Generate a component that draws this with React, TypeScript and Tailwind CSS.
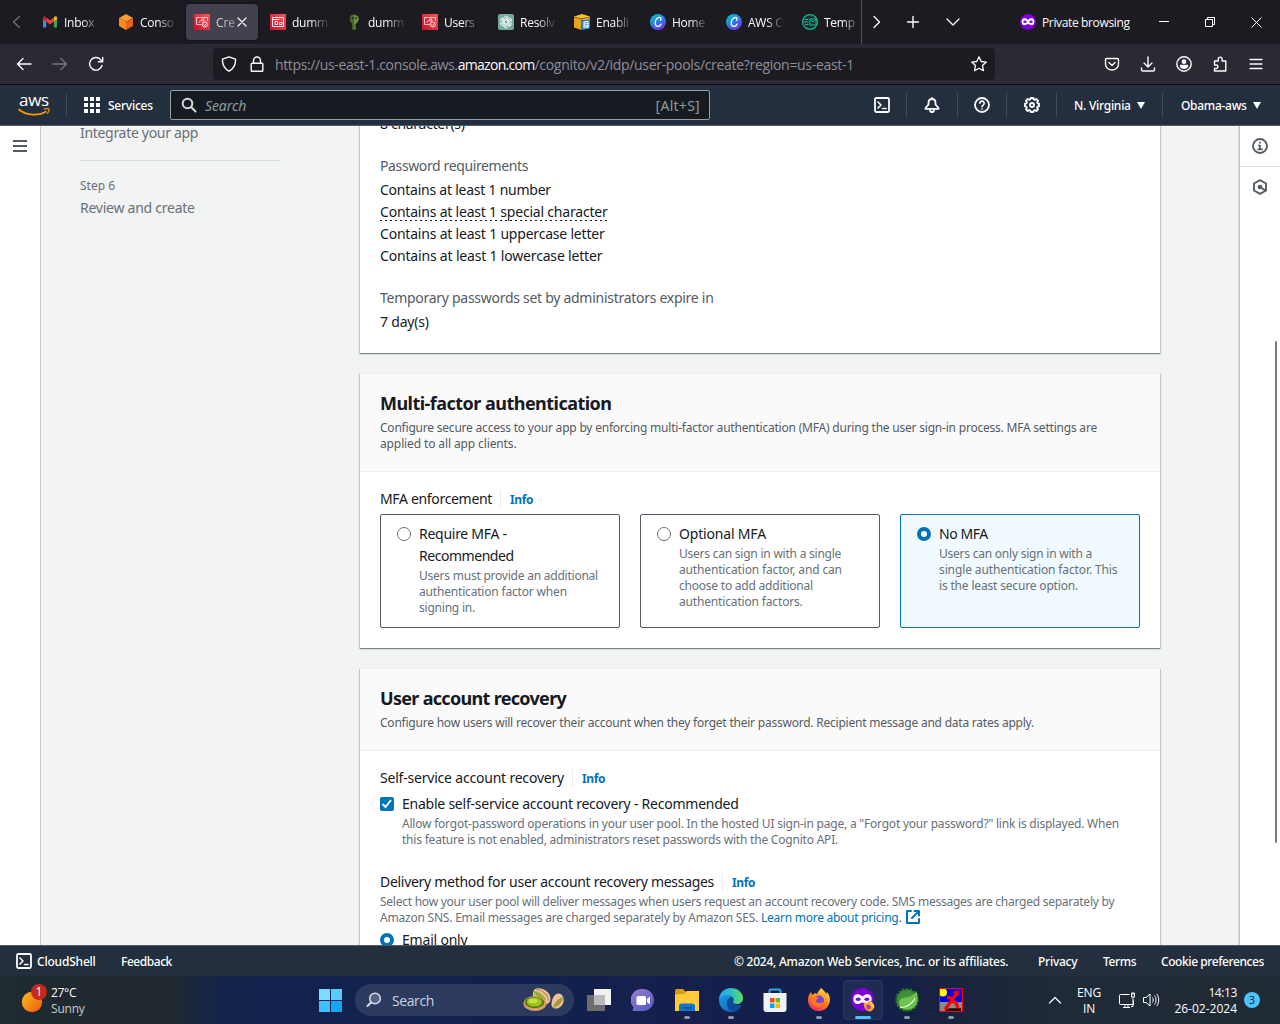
import type { ReactNode } from "react";

/* ---------- Tab icons ---------- */
const GmailIcon = () => (
  <svg width="16" height="16" viewBox="0 0 16 16">
    <path d="M1 13.5V4l3.2 2.4v7.1H2A1 1 0 0 1 1 13.5z" fill="#4285f4" />
    <path d="M11.8 13.5V6.4L15 4v9a.8.8 0 0 1-.9.5z" fill="#34a853" />
    <path d="M11.8 3.4 13 2.6c.9-.6 2 0 2 1.2v1.4l-3.2 2.4z" fill="#fbbc04" />
    <path d="M4.2 7.6V3.4L8 6.3l3.8-2.9v4.2L8 10.5z" fill="#ea4335" />
    <path d="M1 5.200V3.800c0-1.200 1.100-1.800 2-1.200l1.200.8v4.200z" fill="#c5221f" />
  </svg>
);
const CubeIcon = () => (
  <svg width="16" height="16" viewBox="0 0 16 16">
    <path d="M8 0l7 3.900L8 7.800 1 3.900z" fill="#fb9a2c" />
    <path d="M1 3.900l7 3.900V16l-7-3.900z" fill="#f68a1f" />
    <path d="M15 3.900L8 7.800V16l7-3.900z" fill="#e8601b" />
  </svg>
);
const CognitoIcon = () => (
  <svg width="16" height="16" viewBox="0 0 16 16" fill="none" stroke="#fff">
    <defs>
      <linearGradient id="cog" x1="0" y1="1" x2="1" y2="0">
        <stop stopColor="#c8102e" />
        <stop offset="1" stopColor="#ff5252" />
      </linearGradient>
    </defs>
    <path d="M0 0h16v16H0z" fill="url(#cog)" stroke="none" />
    <path d="M7.500 10.500h-5v-7h11V7M4.500 8.500l3-2.300" strokeWidth=".8" strokeOpacity=".9" />
    <circle cx="8.800" cy="6" r="1.200" strokeWidth=".8" />
    <circle cx="10.800" cy="10.500" r="2.500" strokeWidth=".9" />
    <path d="M9.600 10.500l1 1 1.500-1.700" strokeWidth=".8" />
  </svg>
);
const CardIcon = () => (
  <svg width="16" height="16" viewBox="0 0 16 16" fill="none" stroke="#fff" strokeWidth=".9">
    <path d="M0 0h16v16H0z" fill="url(#cog)" stroke="none" />
    <path d="M2.500 3.500h11v9h-11zM2.500 5.500h7M5 7.500h2.500v3H5zM9.500 8.500h2.500v2H9.500zM11 5h1" />
  </svg>
);
const KeyIcon = () => (
  <svg width="16" height="16" viewBox="0 0 16 16">
    <path d="M5 1.500L8 .5l4 1.500 1 3-1.500 3.500-1.500 1v5L8 16l-1.500-1V9.500L4 7V4z" fill="#6b8e3a" />
    <path d="M8 .5L5 1.500 4 4v3l2.500 2.500V15L8 16z" fill="#4b612c" />
    <path d="M6.200 3.200h1.700v1.600H6.200zM9.200 3.200h1.600v1.600H9.200zM8.700 10.500h2v1h-2zM8.700 12.500h1.500v.8H8.700z" fill="#1c1b22" />
  </svg>
);
const GptIcon = () => (
  <svg width="16" height="16" viewBox="0 0 16 16" fill="none" stroke="#fff" strokeWidth=".85">
    <rect width="16" height="16" rx="2" fill="#74aa9c" stroke="none" />
    {[0, 60, 120, 180, 240, 300].map((a) => (
      <path key={a} transform={`rotate(${a} 8 8)`} d="M8 5.800L5.800 7.100V4.400a2.300 2.300 0 0 1 4-1.500L7.200 4.500v2" />
    ))}
  </svg>
);
const EnableIcon = () => (
  <svg width="16" height="16" viewBox="0 0 16 16">
    <path d="M0 2.500L8 0l8 2.500v3L8 4.500 0 5z" fill="#fbc02d" />
    <path d="M0 3l7.500 1.500V16L0 13.500z" fill="#e8a320" />
    <path d="M7.500 4.500L16 3v3H7.500z" fill="#f0ac26" />
    <path d="M0 3.200l7.500 1.500L16 3.200" fill="none" stroke="#5a3c0b" strokeWidth=".7" />
    <path d="M8 6.500l8-1.500v9.500L8 16z" fill="#2d86c4" />
    <path d="M9.500 7.500l5-.8v6.800l-5 .8z" fill="#fff" />
    <path d="M10.500 9l3-.5M10.500 11l3-.5M10.500 13l2-.4" stroke="#2d86c4" />
  </svg>
);
const CanvaIcon = () => (
  <svg width="16" height="16" viewBox="0 0 16 16">
    <defs>
      <linearGradient id="canva" x1=".15" y1="0" x2=".75" y2="1">
        <stop stopColor="#00c4cc" />
        <stop offset=".5" stopColor="#2b7de9" />
        <stop offset="1" stopColor="#7d2ae8" />
      </linearGradient>
    </defs>
    <circle cx="8" cy="8" r="8" fill="url(#canva)" />
    <path d="M10.600 6.400c.9-1.500.4-3-1-3C7.200 3.400 5.200 6.300 5.200 8.900c0 2.100 1.100 3.400 2.700 3.400 1.500 0 2.600-1 3.200-2.200" fill="none" stroke="#fff" strokeWidth="1.300" strokeLinecap="round" />
  </svg>
);
const TempIcon = () => (
  <svg width="16" height="16" viewBox="0 0 16 16" fill="none" stroke="#14b88a">
    <circle cx="8" cy="8" r="7.400" fill="#20303a" strokeWidth="1.200" />
    <path d="M8 5h6v6H8zM8 5l3 3 3-3M3 5.500h3.500M2 8h4.500M3 10.500h3.500" />
  </svg>
);
const tabs: { t: string; icon: ReactNode; active?: boolean }[] = [
  { t: "Inbox", icon: <GmailIcon /> },
  { t: "Conso", icon: <CubeIcon /> },
  { t: "Cre", icon: <CognitoIcon />, active: true },
  { t: "dumm", icon: <CardIcon /> },
  { t: "dumm", icon: <KeyIcon /> },
  { t: "Users", icon: <CognitoIcon /> },
  { t: "Resolv", icon: <GptIcon /> },
  { t: "Enabli", icon: <EnableIcon /> },
  { t: "Home", icon: <CanvaIcon /> },
  { t: "AWS C", icon: <CanvaIcon /> },
  { t: "Temp", icon: <TempIcon /> },
];

const MaskIcon = ({ size }: { size: number }) => (
  <svg width={size} height={size} viewBox="0 0 16 16">
    <circle cx="8" cy="8" r="8" fill="#7f00d6" />
    <path d="M8 5.900C6.800 4.600 5.600 4.300 4.600 4.300 2.700 4.300 1.600 5.700 1.600 7.700c0 2 1.200 3.500 3 3.500 1.500 0 2.200-1.200 3.400-1.200s1.900 1.200 3.400 1.200c1.800 0 3-1.500 3-3.500s-1.100-3.400-3-3.400c-1 0-2.200.3-3.400 1.600z" fill="#fff" />
    <ellipse cx="5" cy="7.800" rx="1.700" ry="1.200" fill="#7f00d6" />
    <ellipse cx="11" cy="7.800" rx="1.700" ry="1.200" fill="#7f00d6" />
  </svg>
);

const Stroke = ({ d, w = 16, sw = 1.4, c = "#fbfbfe", children, cls = "" }: { d?: string; w?: number; sw?: number; c?: string; children?: ReactNode; cls?: string }) => (
  <svg width={w} height={w} viewBox="0 0 16 16" fill="none" stroke={c} strokeWidth={sw} strokeLinecap="round" strokeLinejoin="round" className={"shrink-0 " + cls}>
    {d && <path d={d} />}
    {children}
  </svg>
);

function TabStrip() {
  return (
    <div className="flex h-11 bg-[#1c1b22] font-['Open_Sans',sans-serif] text-[12px] text-[#fbfbfe]">
      <div className="flex w-[34px] shrink-0 items-center pl-[9px]">
        <Stroke d="M10.500 2.500L4.500 8l6 5.500" c="#77767c" sw={1.2} />
      </div>
      <div className="flex w-[828px] shrink-0 overflow-hidden border-r border-[#52525e] py-1">
        {tabs.map((tab, i) => (
          <div key={i} className="w-[76px] shrink-0">
            <div className={"flex h-9 w-[72px] items-center rounded pl-2 " + (tab.active ? "bg-[#42414d] shadow-[0_0_3px_rgba(0,0,0,0.6)]" : "")}>
              <span className="w-4 shrink-0">{tab.icon}</span>
              <span className={"ml-1.5 shrink-0 whitespace-nowrap pt-px " + (tab.active ? "w-[19px] tracking-[-0.1px] [mask-image:linear-gradient(to_right,#000c_10%,#0006)]" : "w-[36px] tracking-[-0.25px] [mask-image:linear-gradient(to_right,black_50%,#0003_90%)]")}>
                {tab.t}
              </span>
              {tab.active && <Stroke d="M4 4l8 8M12 4l-8 8" sw={1.2} cls="ml-[-1px]" />}
            </div>
          </div>
        ))}
      </div>
      <div className="flex flex-1 items-center">
        <Stroke d="M6 2.500l5.500 5.500L6 13.500" sw={1.3} cls="ml-[6px]" />
        <Stroke d="M8 2.500v11M2.500 8h11" sw={1.4} cls="ml-[21px]" />
        <Stroke d="M2 5l6 6 6-6" sw={1.3} cls="ml-[24px]" />
        <span className="ml-[59px]"><MaskIcon size={16} /></span>
        <span className="ml-1.5 w-[91px] whitespace-nowrap pt-px tracking-[-0.36px]">Private browsing</span>
        <svg width="10" height="10" className="ml-[26px]" stroke="#fff" fill="none"><path d="M0 4.500h10" /></svg>
        <svg width="10" height="10" className="ml-[36px]" stroke="#fff" fill="none"><path d="M.5 2.500h7v7h-7zM2.500 2.500v-2h7v7h-2" /></svg>
        <svg width="11" height="11" className="ml-[36px]" stroke="#fff" fill="none"><path d="M.5.5l10 10M10.500.5l-10 10" /></svg>
      </div>
    </div>
  );
}

function Toolbar() {
  return (
    <div className="flex h-[41px] items-center border-b border-[#0c0c0d] bg-[#2b2a33]">
      <Stroke d="M15 8H1.500M7 2.500L1.500 8 7 13.500" cls="ml-4" />
      <Stroke d="M1 8h13.500M9 2.500l5.500 5.500L9 13.500" c="#77767c" cls="ml-5" />
      <Stroke cls="ml-5" d="M14 9.500A6.300 6.300 0 1 1 12.500 3.500L14.500 5.500M14.700 1.500v4.200h-4.200" />
      <div className="ml-[109px] flex h-8 w-[782px] items-center rounded bg-[#1c1b22]">
        <Stroke cls="ml-2" d="M8 .8l6.500 2.400c.3 5-2 9.500-6.500 12-4.500-2.500-6.800-7-6.500-12z" />
        <Stroke cls="ml-3" d="M3 7.200h10a.8.8 0 0 1 .8.8v6.400a.8.8 0 0 1-.8.8H3a.8.8 0 0 1-.8-.8V8a.8.8 0 0 1 .8-.8zM4.500 7V4.500a3.500 3.500 0 0 1 7 0V7" />
        <div className="ml-[10px] whitespace-nowrap pt-px font-['Open_Sans',sans-serif] text-[14px] tracking-[-0.373px] text-[#8f8f98]">
          https://us-east-1.console.aws.<span className="tracking-[-0.7px] text-[#fbfbfe]">amazon.com</span><span className="tracking-[-0.31px]">/cognito/v2/idp/user-pools/create?region=us-east-1</span>
        </div>
        <Stroke cls="ml-auto mr-2" sw={1.3} d="M8 .8l2.200 4.700 5.100.6-3.800 3.500 1 5.100L8 12.200l-4.500 2.500 1-5.100L.7 6.100l5.100-.6z" />
      </div>
      <div className="ml-auto flex items-center gap-5 pr-4">
        <Stroke d="M2.500 2.500h11a1 1 0 0 1 1 1V8a6.500 6 0 0 1-13 0V3.500a1 1 0 0 1 1-1zM5 6.500l3 3 3-3" />
        <Stroke d="M8 1v10M4 7l4 4 4-4M1.500 12v1.500a1.500 1.500 0 0 0 1.500 1.500h10a1.500 1.500 0 0 0 1.500-1.500V12" />
        <Stroke>
          <circle cx="8" cy="8" r="7.200" />
          <circle cx="8" cy="5.700" r="1.700" fill="#fbfbfe" />
          <path d="M4.500 9.500h7c0 1.800-1.600 2.700-3.500 2.700s-3.500-.9-3.500-2.700z" fill="#fbfbfe" />
        </Stroke>
        <Stroke d="M2.500 5h3.800V3a1.900 1.900 0 0 1 3.800 0v2h3.700v10H2.500v-2.500h1.700a1.700 1.700 0 0 0 0-3.500H2.500z" />
        <Stroke d="M2 3.500h12M2 8h12M2 12.500h12" sw={1.3} />
      </div>
    </div>
  );
}

const ShellIcon = ({ cls = "" }: { cls?: string }) => (
  <Stroke sw={1.8} cls={cls}>
    <rect x="1" y="1" width="14" height="14" rx="1.200" />
    <path d="M4 5l3 3-3 3M8.500 11.500H12" strokeWidth="1.600" />
  </Stroke>
);
const Bar = ({ cls = "" }: { cls?: string }) => <span className={"h-6 w-px shrink-0 bg-[#414d5c] " + cls} />;
const Caret = ({ cls = "" }: { cls?: string }) => (
  <svg width="8" height="7" viewBox="0 0 8 7" className={cls}><path d="M0 0h8L4 7z" fill="#fff" /></svg>
);

function AwsHeader() {
  return (
    <div className="flex h-[41px] items-center border-b border-[#545b64] bg-[#232f3e] font-['Noto_Sans',sans-serif] text-[12px] font-medium text-white">
      <div className="ml-[18px] flex w-8 shrink-0 flex-col items-center">
        <span className="h-3 font-['Open_Sans',sans-serif] text-[17px] font-medium leading-[10px] tracking-[-0.3px]">aws</span>
        <svg width="32" height="8" viewBox="0 0 32 8" fill="none" stroke="#f90" className="mt-px">
          <path d="M.5 1.200C8.500 7.800 21 8.200 28.500 3.200" strokeWidth="1.700" />
          <path d="M26 1.300c2-.8 4-.9 4.800-.4.5.800-.2 3-1.600 4.800" strokeWidth="1.200" />
        </svg>
      </div>
      <Bar cls="ml-4 h-[22px]" />
      <div className="ml-[17px] grid shrink-0 grid-cols-3 gap-[2px]">
        {Array.from({ length: 9 }, (_, i) => <i key={i} className="size-[4px] bg-white" />)}
      </div>
      <span className="ml-2 w-[46px] pt-px tracking-[-0.25px]">Services</span>
      <div className="ml-4 flex h-[30px] w-[540px] shrink-0 items-center rounded-[2px] border border-[#95a0a0] bg-[#161b22] text-[14px] font-normal text-[#8d9b9b]">
        <Stroke cls="ml-2.5" sw={2} c="#d5dbdb"><circle cx="6.500" cy="6.500" r="4.800" /><path d="M10.300 10.300l4.200 4.200" /></Stroke>
        <span className="ml-2 italic tracking-[-0.1px]">Search</span>
        <span className="ml-auto mr-[9px] tracking-[0.28px]">[Alt+S]</span>
      </div>
      <ShellIcon cls="ml-[164px]" />
      <Bar cls="ml-4" />
      <Stroke sw={1.800} cls="ml-[17px]" d="M8 1v1M8 2c-2.500 0-3.500 1.800-3.500 4v1.500L1.500 11v.8h13V11l-3-3.500V6c0-2.200-1-4-3.500-4zM6 12.500C6 16 10 16 10 12.500" />
      <Bar cls="ml-[17px]" />
      <Stroke sw={1.800} cls="ml-4"><circle cx="8" cy="8" r="7" /><path d="M5.800 6.300a2.200 2.200 0 1 1 3.300 1.900C8.300 8.600 8 9 8 9.800M8 11.800v.2" strokeWidth="1.600" /></Stroke>
      <Bar cls="ml-4" />
      <Stroke sw={1.900} cls="ml-[17px]">
        <path d="M6.700 1h2.600l.4 1.400 1.200.5L12.300 2l1.700 1.700-.8 1.400.5 1.200 1.300.4v2.600l-1.400.4-.5 1.200.9 1.400-1.700 1.700-1.400-.8-1.200.5-.4 1.300H6.700l-.4-1.400-1.200-.5-1.400.9L2 12.300l.8-1.400-.5-1.200L1 9.300V6.700l1.400-.4.5-1.200L2 3.700 3.700 2l1.400.8 1.200-.5z" />
        <circle cx="8" cy="8" r="2" />
      </Stroke>
      <Bar cls="ml-4" />
      <span className="ml-[17px] w-[59px] whitespace-nowrap pt-px tracking-[-0.26px]">N. Virginia</span>
      <Caret cls="ml-1" />
      <Bar cls="ml-[17px]" />
      <span className="ml-[18px] w-[68px] whitespace-nowrap pt-px tracking-[-0.29px]">Obama-aws</span>
      <Caret cls="ml-1" />
    </div>
  );
}

/* ---------- Console content ---------- */
const shadow = "shadow-[0_1px_1px_0_rgba(0,28,36,0.3),1px_1px_1px_0_rgba(0,28,36,0.15),-1px_1px_1px_0_rgba(0,28,36,0.15)]";
const Line = ({ children, cls = "" }: { children: ReactNode; cls?: string }) => (
  <div className={"whitespace-nowrap text-[14px] leading-[22px] " + cls}>{children}</div>
);
const Small = ({ children, cls = "" }: { children: ReactNode; cls?: string }) => (
  <div className={"whitespace-nowrap text-[12px] leading-4 " + cls}>{children}</div>
);
const Info = () => (
  <span className="ml-2 flex h-[18px] items-center border-l border-[#eaeded] pl-[9px] pt-[2px] text-[12px] font-bold tracking-[-0.4px] text-[#0073bb]">Info</span>
);
const Radio = ({ on = false, cls = "" }: { on?: boolean; cls?: string }) => (
  <span className={"size-[14px] shrink-0 rounded-full bg-white " + (on ? "border-[4px] border-[#0073bb] " : "border border-[#687078] ") + cls} />
);

function Tile({ title, desc, on }: { title: [string, string][]; desc: [string, string][]; on?: boolean }) {
  return (
    <div className={"flex h-[114px] w-60 rounded-[2px] border pl-4 pt-2 " + (on ? "border-[#0073bb] bg-[#f1faff]" : "border-[#545b64] bg-white")}>
      <Radio on={on} cls="mt-1" />
      <div className="ml-2">
        {title.map(([t, k]) => <Line key={t} cls={k}>{t}</Line>)}
        <div className="mt-px text-[#687078]">
          {desc.map(([t, k]) => <Small key={t} cls={k}>{t}</Small>)}
        </div>
      </div>
    </div>
  );
}

function Content() {
  return (
    <div className="relative flex h-[819px] overflow-hidden bg-[#f2f3f3] font-['Noto_Sans',sans-serif] text-[#16191f]">
      <div className="w-[41px] shrink-0 border-r border-[#c5cccc] bg-white pl-[13px] pt-[14px]">
        <svg width="14" height="12" fill="#545b64"><path d="M0 0h14v2H0zM0 5h14v2H0zM0 10h14v2H0z" /></svg>
      </div>
      <div className="ml-[39px] w-[200px] shrink-0 text-[#687078]">
        <Line cls="mt-[-4px] tracking-[-0.31px]">Integrate your app</Line>
        <div className="mt-4 border-t border-[#d5dbdb]" />
        <Small cls="mt-[17px]">Step 6</Small>
        <Line cls="mt-[3px] tracking-[-0.25px]">Review and create</Line>
      </div>
      <div className="ml-20 mt-[-14px] w-[800px] shrink-0">
        <section className={"h-[241px] bg-white pl-5 pt-px " + shadow}>
          <Line cls="tracking-[-0.3px]">8 character(s)</Line>
          <Line cls="mt-5 tracking-[-0.38px] text-[#545b64]">Password requirements</Line>
          <Line cls="mt-0.5 tracking-[-0.24px]">Contains at least 1 number</Line>
          <div className="flex h-[22px]">
            <Line cls="h-[20px] tracking-[-0.206px] [background:repeating-linear-gradient(to_right,#16191f_0_2px,transparent_2px_5px)_0_100%/100%_1px_no-repeat]">Contains at least 1 special character</Line>
          </div>
          <Line cls="tracking-[-0.203px]">Contains at least 1 uppercase letter</Line>
          <Line cls="tracking-[-0.18px]">Contains at least 1 lowercase letter</Line>
          <Line cls="mt-5 tracking-[-0.279px] text-[#545b64]">Temporary passwords set by administrators expire in</Line>
          <Line cls="mt-0.5 tracking-[-0.2px]">7 day(s)</Line>
        </section>

        <section className={"mt-5 h-[275px] border-t border-[#eaeded] bg-white " + shadow}>
          <header className="h-[98px] border-b border-[#eaeded] bg-[#fafafa] pl-5 pt-[18px]">
            <h2 className="text-[18px] font-bold leading-[22px] tracking-[-0.525px]">Multi-factor authentication</h2>
            <div className="mt-[6px] text-[#545b64]">
              <Small cls="tracking-[-0.212px]">Configure secure access to your app by enforcing multi-factor authentication (MFA) during the user sign-in process. MFA settings are</Small>
              <Small cls="tracking-[-0.12px]">applied to all app clients.</Small>
            </div>
          </header>
          <div className="px-5 pt-4">
            <div className="flex items-center"><Line cls="tracking-[-0.328px]">MFA enforcement</Line><Info /></div>
            <div className="mt-1 flex gap-5">
              <Tile title={[["Require MFA -", "tracking-[-0.27px]"], ["Recommended", "tracking-[-0.46px]"]]} desc={[["Users must provide an additional", "tracking-[-0.229px]"], ["authentication factor when", "tracking-[-0.18px]"], ["signing in.", "tracking-[-0.22px]"]]} />
              <Tile title={[["Optional MFA", "tracking-[-0.18px]"]]} desc={[["Users can sign in with a single", "tracking-[-0.23px]"], ["authentication factor, and can", "tracking-[-0.15px]"], ["choose to add additional", "tracking-[-0.22px]"], ["authentication factors.", "tracking-[-0.16px]"]]} />
              <Tile on title={[["No MFA", "tracking-[-0.42px]"]]} desc={[["Users can only sign in with a", "tracking-[-0.23px]"], ["single authentication factor. This", "tracking-[-0.114px]"], ["is the least secure option.", "tracking-[-0.17px]"]]} />
            </div>
          </div>
        </section>

        <section className={"mt-5 h-[400px] border-t border-[#eaeded] bg-white " + shadow}>
          <header className="h-[82px] border-b border-[#eaeded] bg-[#fafafa] pl-5 pt-[18px]">
            <h2 className="text-[18px] font-bold leading-[22px] tracking-[-0.69px]">User account recovery</h2>
            <Small cls="mt-[6px] tracking-[-0.223px] text-[#545b64]">Configure how users will recover their account when they forget their password. Recipient message and data rates apply.</Small>
          </header>
          <div className="px-5 pt-4">
            <div className="flex items-center"><Line cls="tracking-[-0.203px]">Self-service account recovery</Line><Info /></div>
            <div className="mt-1 flex">
              <span className="mt-1 flex size-[14px] items-center justify-center rounded-[2px] bg-[#0073bb]">
                <svg width="14" height="14" fill="none" stroke="#fff" strokeWidth="2"><path d="M2.500 7l3 3 5.500-7" /></svg>
              </span>
              <div className="ml-2">
                <Line cls="tracking-[-0.235px]">Enable self-service account recovery - Recommended</Line>
                <div className="mt-px text-[#687078]">
                  <Small cls="tracking-[-0.214px]">Allow forgot-password operations in your user pool. In the hosted UI sign-in page, a "Forgot your password?" link is displayed. When</Small>
                  <Small cls="tracking-[-0.209px]">this feature is not enabled, administrators reset passwords with the Cognito API.</Small>
                </div>
              </div>
            </div>
            <div className="mt-[23px] flex items-center"><Line cls="tracking-[-0.296px]">Delivery method for user account recovery messages</Line><Info /></div>
            <div className="mt-px text-[#687078]">
              <Small cls="tracking-[-0.248px]">Select how your user pool will deliver messages when users request an account recovery code. SMS messages are charged separately by</Small>
              <div className="flex h-4">
                <Small cls="w-[381px] tracking-[-0.212px]">Amazon SNS. Email messages are charged separately by Amazon SES.</Small>
                <Small cls="w-[144px] tracking-[-0.26px] text-[#0073bb]">Learn more about pricing.</Small>
                <Stroke c="#0073bb" sw={2} cls="mt-[-1px]" d="M6 2H2v12h12v-4M9.500 2H14v4.500M14 2L7 9" />
              </div>
            </div>
            <div className="mt-[3px] flex"><Radio on cls="mt-1" /><Line cls="ml-2 tracking-[-0.2px]">Email only</Line></div>
          </div>
        </section>
      </div>
      <div className="ml-[79px] flex-1 border-l border-[#b9c0c0] bg-white shadow-[-1px_0_0_#dfe3e3]">
        <div className="flex h-[41px] items-center justify-center border-b border-[#d5dbdb]">
          <Stroke c="#545b64" sw={1.900}><circle cx="8" cy="8" r="7" /><path d="M6.800 7.500H8V11M6.300 11.300h3.600M8 4.500v.2" strokeLinecap="square" strokeWidth="1.700" /></Stroke>
        </div>
        <div className="mt-3 flex justify-center">
          <Stroke c="#545b64" sw={1.900}><path d="M8 1.200l6 3.300v7L8 14.800l-6-3.300v-7zM8 8l5.500 3.500" /><circle cx="8" cy="8" r="1.400" fill="#545b64" /></Stroke>
        </div>
      </div>
      <div className="absolute right-[3px] top-[215px] h-[502px] w-0.5 rounded bg-[#7c7c7f]" />
    </div>
  );
}

function Footer() {
  return (
    <div className="flex h-[31px] items-center whitespace-nowrap border-t border-[#545b64] bg-[#232f3e] font-['Noto_Sans',sans-serif] text-[12px] font-medium text-white">
      <ShellIcon cls="ml-4" />
      <span className="ml-[5px] w-[60px] pt-px tracking-[-0.2px]">CloudShell</span>
      <span className="ml-6 pt-px tracking-[-0.45px]">Feedback</span>
      <span className="ml-auto w-[275px] pt-px tracking-[-0.25px]">© 2024, Amazon Web Services, Inc. or its affiliates.</span>
      <span className="ml-[29px] w-10 pt-px tracking-[-0.25px]">Privacy</span>
      <span className="ml-[25px] w-[33px] pt-px tracking-[-0.4px]">Terms</span>
      <span className="ml-[25px] mr-[15px] w-[104px] pt-px tracking-[-0.42px]">Cookie preferences</span>
    </div>
  );
}

/* ---------- Taskbar ---------- */
const App24 = ({ children, run, on }: { children: ReactNode; run?: boolean; on?: boolean }) => (
  <div className={"flex h-10 w-10 shrink-0 flex-col items-center rounded " + (on ? "border border-[#2b3a63] bg-[#1f2b52] pt-[7px]" : "pt-2")}>
    <div className="size-6">{children}</div>
    {(run || on) && <i className={"mt-1 h-[3px] rounded-full " + (on ? "w-4 bg-[#4cc2ff]" : "w-1.5 bg-[#9095a5]")} />}
  </div>
);

function Taskbar() {
  return (
    <div className="flex h-12 items-center bg-[linear-gradient(to_right,#1f2a31_0,#20292f_170px,#12244c_220px,#10214f_520px,#171f4b_700px,#111f4f_870px,#19223c_950px,#1f2a38_1050px,#1f2a34_100%)] font-['Open_Sans',sans-serif] text-[12px] text-white">
      <svg width="28" height="30" viewBox="0 0 28 30" className="ml-5 mt-[-4px]">
        <defs><linearGradient id="sun" x1="0" y1="0" x2="1" y2="1"><stop stopColor="#fcc11f" /><stop offset="1" stopColor="#f0560c" /></linearGradient></defs>
        <circle cx="12" cy="19" r="10.200" fill="url(#sun)" />
        <circle cx="19" cy="9" r="8" fill="#c42b1c" />
        <text x="19" y="13" fontSize="12" fill="#fff" textAnchor="middle">1</text>
      </svg>
      <div className="ml-[3px] w-[60px] pt-[2px] leading-4"><div className="tracking-[-0.3px]">27°C</div><div className="tracking-[-0.2px] text-[#c8cccf]">Sunny</div></div>
      <div className="ml-[208px] grid w-[23px] shrink-0 grid-cols-2 gap-px">
        <i className="h-[11px] bg-[#7bdcff]" /><i className="h-[11px] bg-[#55ccfb]" /><i className="h-[11px] bg-[#3dc0fb]" /><i className="h-[11px] bg-[#14a5f8]" />
      </div>
      <div className="ml-[13px] flex h-8 w-[219px] shrink-0 items-center rounded-full bg-[#2b3a5e]">
        <Stroke cls="ml-[11px]" c="#d8dce6" sw={1.500}><circle cx="9" cy="6.500" r="5.300" fill="#55617f" /><path d="M5 10.500L1.500 14" strokeWidth="2" /></Stroke>
        <span className="ml-[10px] text-[14px] tracking-[-0.4px] text-[#cdd2dc]">Search</span>
        <svg width="42" height="25" viewBox="0 0 42 25" className="ml-auto mr-[9px] mt-[-2px]">
          <path d="M11 3C14-1 25 2 27 9s-3 9-8 8S7 9 11 3z" fill="#ecc196" />
          <path d="M10.500 4c4.500 0 11.500 5 12.500 9-5.500 0-11.500-4-12.500-9z" fill="#8fae35" />
          <path d="M13 2.500c6 0 12 5 12.500 11" stroke="#c98f5c" strokeWidth="1.200" fill="none" />
          <ellipse cx="12" cy="16.500" rx="11.500" ry="7.500" fill="#d69f6c" />
          <ellipse cx="11.500" cy="15.500" rx="9.800" ry="5.800" fill="#5f7c12" />
          <ellipse cx="11.500" cy="15" rx="7.500" ry="4.600" fill="#9cc21f" />
          <ellipse cx="10" cy="14" rx="4.500" ry="2.200" fill="#c9e04b" />
          <path d="M36 6.500c4 1 5 4 4.500 8S36 22 32 21.500s-4-4-3-8 4-7.500 7-7z" fill="#ecc196" />
          <path d="M40 10c-.5 5-4 9.500-10 11 1-5 5-9.500 10-11z" fill="#a98d4f" />
          <path d="M40 10c-2 3-5 7-9 10" stroke="#8fae35" strokeWidth="1.200" fill="none" />
        </svg>
      </div>
      <div className="ml-[5px] flex shrink-0 gap-1">
        <App24><svg width="24" height="24"><path d="M7 1h17v16H7z" fill="#f2f2f2" /><path d="M0 7h18v16H0z" fill="#6d6d6d" /><path d="M7 7h11v10H7z" fill="#b9b9b9" /></svg></App24>
        <App24>
          <svg width="24" height="24">
            <defs><linearGradient id="chat" x1="0" y1="0" x2="1" y2="1"><stop stopColor="#9a7fc9" /><stop offset="1" stopColor="#5058c8" /></linearGradient></defs>
            <path d="M12 1a11 11 0 1 1 0 22H2.500c-1 0-1.300-.8-.8-1.500l1-2A11 11 0 0 1 12 1z" fill="url(#chat)" /><rect x="5.500" y="8" width="9.500" height="9" rx="1.500" fill="#fff" /><path d="M16 11l3-2.500v8L16 14z" fill="#fff" />
          </svg>
        </App24>
        <App24 run>
          <svg width="24" height="24"><path d="M0 2.500C0 1.500 1 1 2 1h6l3 3v4H0z" fill="#d99a0c" /><path d="M0 6.500l9-.5 2.500-3H24v20H0z" fill="#ffcb3d" /><path d="M4 23v-5c0-1.500 1-2.500 2.500-2.500h11c1.500 0 2.500 1 2.500 2.500v5z" fill="#0f76cf" /><path d="M7 20h10" stroke="#0a5aa5" strokeWidth="2" /></svg>
        </App24>
        <App24 run>
          <svg width="24" height="24" viewBox="0 0 24 24">
            <defs>
              <linearGradient id="edge"><stop stopColor="#2aa5e8" /><stop offset=".5" stopColor="#27bfc7" /><stop offset="1" stopColor="#5ee05a" /></linearGradient>
              <linearGradient id="edgeB" x1="0" y1="0" x2="1" y2="1"><stop stopColor="#1b9de2" /><stop offset="1" stopColor="#0f5cb5" /></linearGradient>
            </defs>
            <path d="M0 12c0-4 4-6 8-6 5 0 7 4 6.500 7-.5 3 2 4.500 5 4.500h2.700C20 22 16 24 12 24 5 24 0 19 0 12z" fill="url(#edgeB)" />
            <path d="M8 15c0-3.500 2.500-6 5-6 2 1.500 1.500 3.500 1 5 0 3 3 4.500 8.500 3.500-2 4-5.500 6-8.500 6-4 0-6-4-6-8.500z" fill="#0c4a95" />
            <path d="M0 12C0 5 5 0 12 0s12 5 12 10c0 4-3 6-6 6-3 0-4.500-1.200-3.500-3 1-2-1-6-6-6C4 7 1 9 0 12z" fill="url(#edge)" />
          </svg>
        </App24>
        <App24>
          <svg width="24" height="24"><path d="M6.500 6V3c0-1 .5-1.500 1.500-1.500h8c1 0 1.500.5 1.500 1.500v3" fill="none" stroke="#27a9e6" strokeWidth="2" /><path d="M.5 5h23v16a3 3 0 0 1-3 3h-17a3 3 0 0 1-3-3z" fill="#f0f2f5" /><path d="M7 10h4.500v4.500H7z" fill="#f25022" /><path d="M12.500 10H17v4.500h-4.500z" fill="#7fba00" /><path d="M7 15.500h4.500V20H7z" fill="#00a4ef" /><path d="M12.500 15.500H17V20h-4.500z" fill="#ffb900" /></svg>
        </App24>
        <App24 run>
          <svg width="24" height="24">
            <defs><linearGradient id="ff" x1=".8" y1="0" x2=".3" y2="1"><stop stopColor="#ffe53a" /><stop offset=".5" stopColor="#ff8a1e" /><stop offset="1" stopColor="#f5265f" /></linearGradient></defs>
            <path d="M4 4l1 3 3-2 2 1c1-3 3-4 4-6 2 2 4 3 5 6l1-2c3 4 4 8 2 12-2 5-6 7-10 7C5 23 1 18 1 12c0-3 1-6 3-8z" fill="url(#ff)" />
            <circle cx="12" cy="12.500" r="5" fill="#7a42d8" />
            <path d="M4 10c3-2 6-1 8 0-1 1-3 1-3 3 1 3 5 3 7 0 0 5-4 7-8 5-3-1-4-5-4-8z" fill="#ff7a1f" />
          </svg>
        </App24>
        <App24 on>
          <div className="grid">
            <span className="col-start-1 row-start-1"><MaskIcon size={23} /></span>
            <svg width="24" height="24" className="col-start-1 row-start-1"><path d="M13 14.500l3 1 2.500-3c3 2 5.500 5 4.500 7.500-1 3-4 4-6 3-3-1-5-5-4-8.500z" fill="#ff9a2a" /><path d="M18.500 12.500c3 2 5.500 5 4.500 7.500l-3-2z" fill="#ffd53a" /><circle cx="17.500" cy="19" r="2.200" fill="#b03ad0" /></svg>
          </div>
        </App24>
        <App24 run>
          <svg width="24" height="24"><circle cx="12" cy="12" r="10.500" fill="#3f8f3a" stroke="#2f7a2e" strokeWidth="2.500" strokeDasharray="2.200 1.500" /><path d="M21.500 3c3 10 0 18.500-9 18.500-5 0-8.500-2.500-8.500-6.500C4 7 17 12 21.500 3z" fill="#6cc24a" /><path d="M5 19.500c7 0 12-4 15-9" stroke="#f2faee" strokeWidth="1.200" fill="none" /></svg>
        </App24>
        <App24 run>
          <svg width="24" height="24"><path d="M0 0h24v24H0z" fill="#0000f0" /><path d="M1 14h22v9H1z" fill="#8a8a8a" /><circle cx="4" cy="4.500" r="4" fill="#ff0" /><path d="M6 22c4-3 10-1 16-2v3H6z" fill="#111" /><path d="M17 6.500l-5 7-6 8M8 9l5 1.500M13 13l4 2 2 5" stroke="#f00" strokeWidth="3.200" fill="none" /><circle cx="17.500" cy="5" r="2.600" fill="#f00" /><path d="M.5.5h23v23H.5z" fill="none" stroke="#f00" /></svg>
        </App24>
      </div>
      <Stroke cls="ml-[76px]" d="M2.500 11L8 5.500l5.500 5.500" sw={1.200} />
      <div className="ml-3 w-[28px] pt-px text-center leading-4 tracking-[-0.2px]">ENG<br />IN</div>
      <svg width="18" height="18" viewBox="0 0 18 18" className="ml-[16px]" fill="none" stroke="#fff"><path d="M10.500 3.500h-9a1 1 0 0 0-1 1v8a1 1 0 0 0 1 1h13v-4M4 16.500h7M6 13.500v3M9 13.500v3M12.500 2v4h3V2zM12.500 3h3M14 6v9.500h-2" /></svg>
      <svg width="18" height="18" viewBox="0 0 18 18" className="ml-[5px]" fill="none" stroke="#fff"><path d="M1.500 6.500H4l4-3.500v12l-4-3.500H1.500zM10.500 6.500c1 1.500 1 3.500 0 5M12.500 4.500c2 2.500 2 6.500 0 9M14.800 3c2.500 3.500 2.500 8.500 0 12" /></svg>
      <div className="ml-auto w-[63px] whitespace-nowrap pt-px text-right leading-4"><div className="tracking-[-0.4px]">14:13</div><div>26-02-2024</div></div>
      <span className="ml-[7px] mr-5 flex size-4 items-center justify-center rounded-full bg-[#4cc2ff] text-[11px] text-[#10202c]">3</span>
    </div>
  );
}

export default function App() {
  return (
    <div className="h-[1024px] w-[1280px] overflow-hidden">
      <TabStrip />
      <Toolbar />
      <AwsHeader />
      <Content />
      <Footer />
      <Taskbar />
    </div>
  );
}
